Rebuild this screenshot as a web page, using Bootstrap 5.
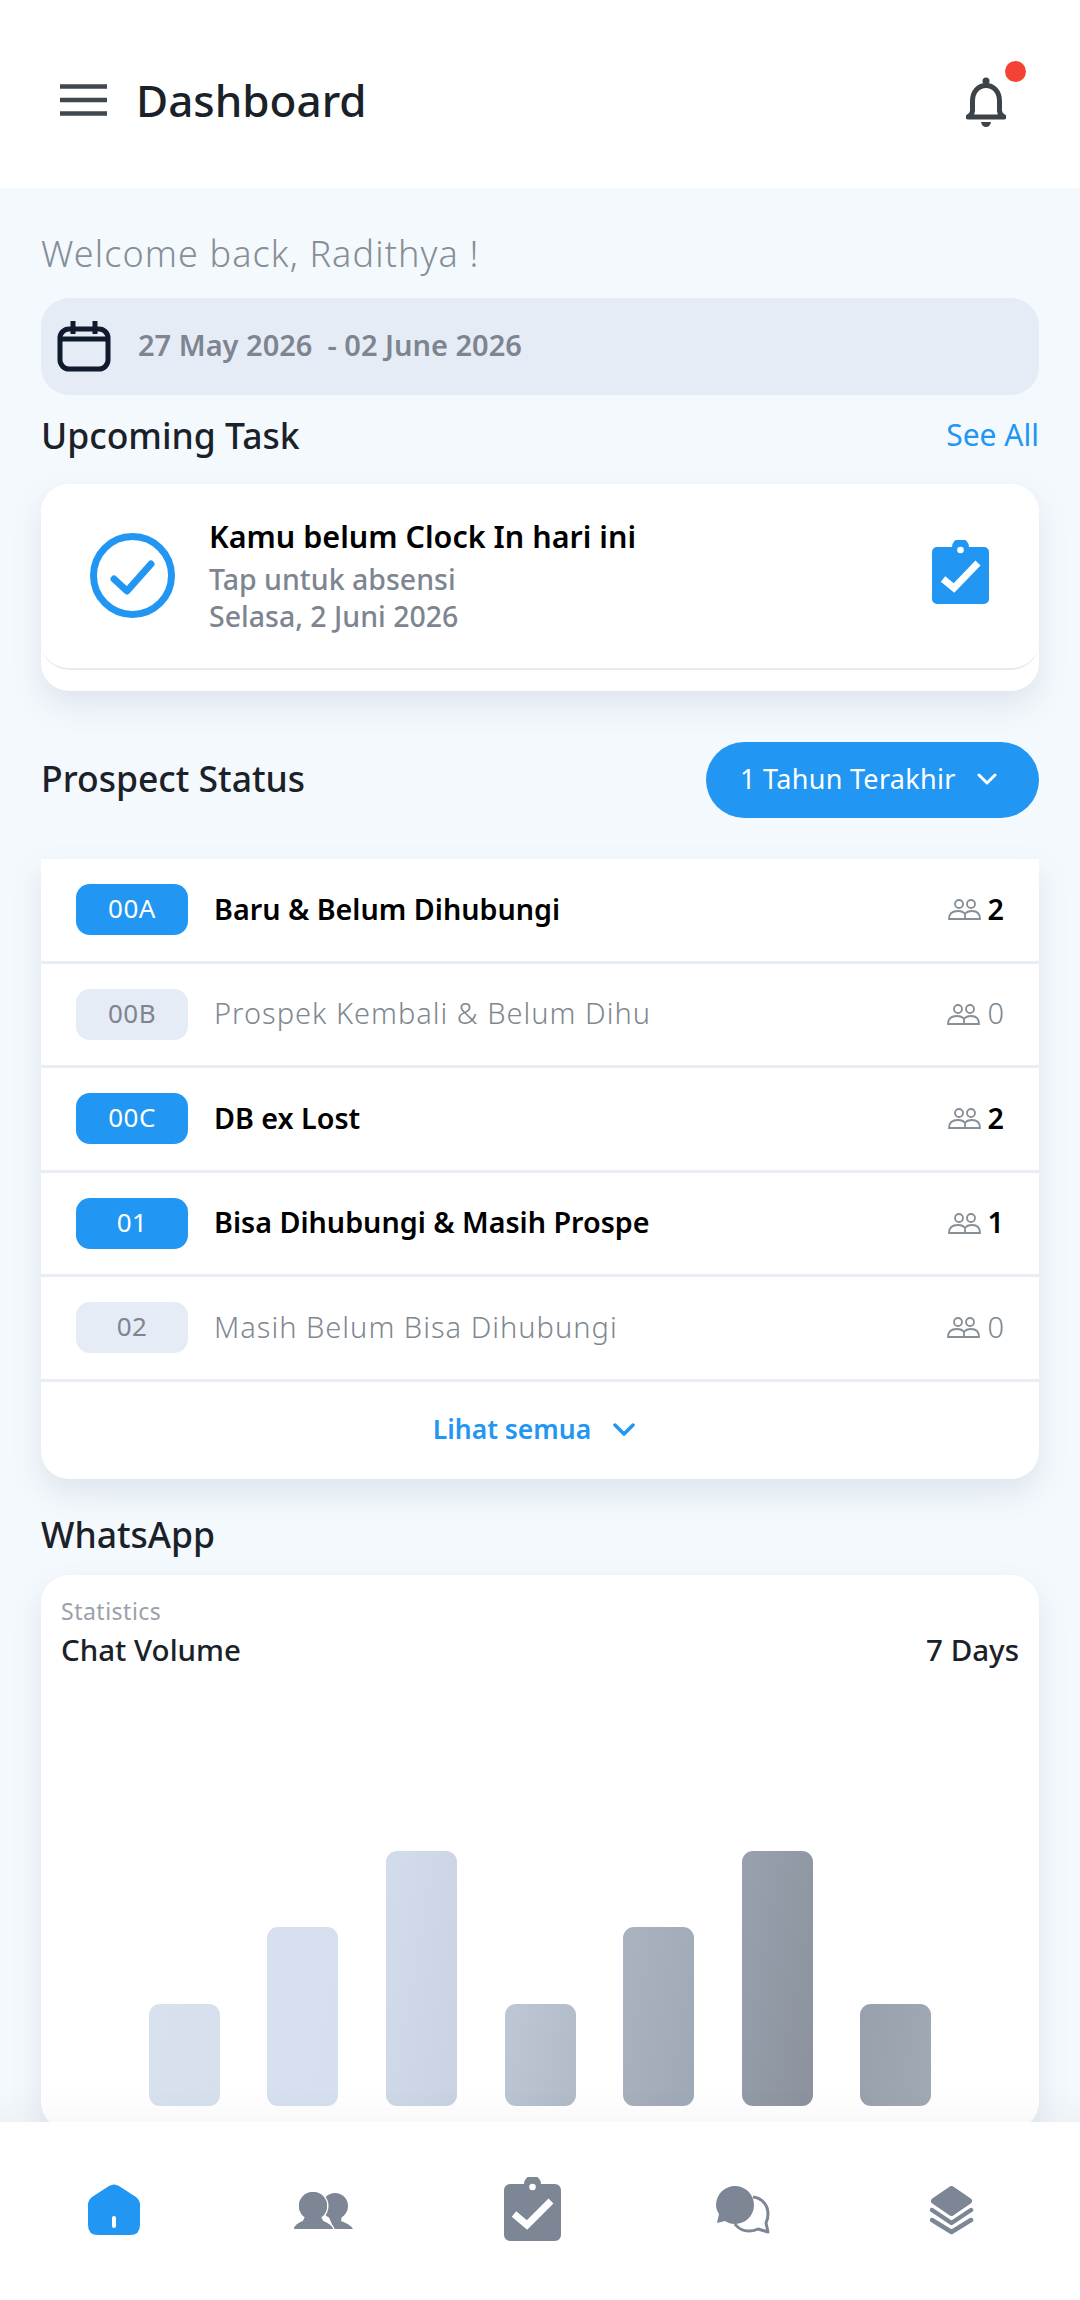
<!DOCTYPE html>
<html lang="en">
<head>
  <meta charset="UTF-8" />
  <title>Dashboard</title>
  <meta name="viewport" content="width=device-width, initial-scale=1.0" />
  <link href="https://cdn.jsdelivr.net/npm/bootstrap@5.3.2/dist/css/bootstrap.min.css" rel="stylesheet" />
  <style>
    html, body { height: 2300px; overflow: hidden; }
    body { font-family: "Noto Sans", sans-serif; background-color: #f4f9fd; color: #1b2128; }

    .top-bar { height: 188px; background: #fff; padding: 12px 54px 0 60px; }
    .top-title { font-size: 44px; line-height: 60px; font-weight: 500; margin: 0 0 0 29px; color: #1b2128; }
    .bell-wrap { width: 60px; height: 68px; margin-bottom: 10px; }
    .bell-icon { left: 0; bottom: 2px; }
    .bell-dot { top: 0; right: 0; width: 21px; height: 21px; border-radius: 50%; background: #f44336; }

    .page-body { padding: 41px 41px 0; }
    .welcome { font-size: 36px; line-height: 50px; color: #868e96; letter-spacing: 1.1px; font-weight: 300; }
    .date-bar { height: 97px; margin-top: 19px; padding-left: 16px; background: #e6ecf5; border-radius: 28px; gap: 27px; font-size: 29px; font-weight: 600; color: #7d8590; }
    .date-text { padding-bottom: 3px; }
    .section-head { font-size: 35.5px; line-height: 40px; padding-bottom: 4px; font-weight: 500; color: #1b2128; }
    .see-all { font-size: 30px; line-height: 40px; padding-bottom: 4px; color: #2196f3; text-decoration: none; }

    .soft-card { background: #fff; border: 0; border-radius: 28px; box-shadow: 0 14px 32px rgba(70, 90, 120, .13); }
    .task-card { height: 207px; margin-top: 25px; }
    .task-inner { height: 186px; padding: 0 50px 2px 49px; border-radius: 0 0 28px 28px; border-bottom: 2px solid #e6ebf0; }
    .task-title { font-size: 30.5px; line-height: 42px; font-weight: 600; color: #000; margin-bottom: 4px; }
    .task-sub { font-size: 28.5px; line-height: 37px; color: #7d8590; font-weight: 500; }
    .task-text { margin-left: 34px; }
    .task-clip { margin-bottom: 6px; }

    .prospect-head { margin-top: 51px; }
    .range-btn { width: 333px; height: 76px; padding: 0 42px 2px 34px; border-radius: 38px; background: #2196f3; border: 0; color: #fff; font-size: 27px; letter-spacing: .3px; }
    .range-btn:hover { background: #2196f3; color: #fff; }

    .status-card { height: 620px; margin-top: 41px; border-radius: 0 0 28px 28px; overflow: hidden; }
    .list-group-flush > .status-row, .list-group-flush > .status-row:last-child { height: 104.5px; padding: 0 35px; background: #fff; border: 0; border-bottom: 3px solid #e9eef4; border-radius: 0; font-size: 28.7px; font-weight: 600; color: #000; }
    .list-group-flush > .status-row.is-empty { font-size: 29px; font-weight: 300; color: #7f878f; letter-spacing: 1px; }
    .row-name { padding-bottom: 3px; }
    .code-tag { width: 112px; height: 51px; margin-right: 26px; padding-bottom: 2px; border-radius: 14px; font-size: 26px; font-weight: 400; letter-spacing: .5px; background: #2196f3; color: #fff; }
    .is-empty .code-tag { background: #e6ecf5; color: #7d8590; }
    .row-count { gap: 7px; letter-spacing: 0; }
    .count-num { padding-bottom: 3px; }
    .see-more { height: 97px; padding-right: 12px; gap: 22px; font-size: 26.500px; font-weight: 600; color: #2196f3; }

    .whatsapp-head { margin-top: 35px; }
    .chat-card { margin-top: 17px; height: 555px; padding: 22px 20px 0; }
    .stat-label { font-size: 23px; line-height: 28px; letter-spacing: .5px; color: #9aa1a9; }
    .chat-head { margin-top: 5px; font-size: 29.5px; line-height: 40px; font-weight: 500; color: #1b2128; }
    .bars { margin-top: 181px; height: 255px; gap: 47.6px; }
    .bar-item { width: 71px; border-radius: 11px; }

    .bottom-nav { height: 178px; background: #fff; padding: 0 23px 2px 9px; }
    .bottom-nav::before { content: ""; position: absolute; left: 0; right: 0; top: -34px; height: 34px; background: linear-gradient(rgba(0, 0, 0, 0), rgba(0, 0, 0, .025)); }
    .nav-clip { margin-bottom: 3px; }
  </style>
</head>
<body>
  <!-- Header -->
  <header class="top-bar d-flex align-items-center justify-content-between">
    <div class="d-flex align-items-center">
      <svg width="47" height="32" viewBox="0 0 47 32"><path d="M0 2.5h47M0 16h47M0 29.500h47" stroke="#3f474f" stroke-width="4.500" fill="none"/></svg>
      <h1 class="top-title">Dashboard</h1>
    </div>
    <div class="bell-wrap position-relative">
      <svg class="bell-icon position-absolute" width="40" height="50" viewBox="0 0 40 50"><path d="M6.500 34V24C6.500 15 12 8.500 20 8.500S33.500 15 33.500 24v10q.5 4 4.500 6H2q4-2 4.500-6Z" fill="none" stroke="#3c4349" stroke-width="5" stroke-linejoin="round"/><circle cx="20" cy="4" r="3.500" fill="#3c4349"/><path d="M15 45h10q-1 5-5 5t-5-5Z" fill="#3c4349"/></svg>
      <span class="bell-dot position-absolute"></span>
    </div>
  </header>

  <main class="page-body">
    <div class="welcome">Welcome back, Radithya !</div>

    <div class="date-bar d-flex align-items-center">
      <svg width="54" height="51" viewBox="0 0 54 51" fill="none" stroke="#111b2e" stroke-width="5"><rect x="3" y="8" width="48" height="40" rx="9"/><path d="M3 18h48M16 0v13M38 0v13"/></svg>
      <span class="date-text">27 May 2026 &nbsp;- 02 June 2026</span>
    </div>

    <div class="d-flex align-items-center justify-content-between mt-3 pt-1">
      <div class="section-head">Upcoming Task</div>
      <a class="see-all" href="#">See All</a>
    </div>

    <div class="card soft-card task-card">
      <div class="task-inner d-flex align-items-center">
        <svg width="85" height="85" viewBox="0 0 85 85" fill="none" stroke="#2196f3" stroke-width="7" stroke-linecap="round" stroke-linejoin="round"><circle cx="42.500" cy="42.500" r="39"/><path d="M24 46l13 12 24-27"/></svg>
        <div class="task-text flex-grow-1">
          <div class="task-title">Kamu belum Clock In hari ini</div>
          <div class="task-sub">Tap untuk absensi</div>
          <div class="task-sub">Selasa, 2 Juni 2026</div>
        </div>
        <svg class="task-clip" width="57" height="64" viewBox="0 0 57 64"><path d="M5 7h15a8.500 8.500 0 0 1 17 0h15a5 5 0 0 1 5 5v47a5 5 0 0 1-5 5H5a5 5 0 0 1-5-5V12a5 5 0 0 1 5-5Z" fill="#2196f3"/><circle cx="28.500" cy="10" r="3.300" fill="#fff"/><path d="M11 39l11 9 24-25" fill="none" stroke="#fff" stroke-width="7"/></svg>
      </div>
    </div>

    <div class="d-flex align-items-center justify-content-between prospect-head">
      <div class="section-head">Prospect Status</div>
      <button class="btn range-btn d-flex align-items-center justify-content-between" type="button">
        1 Tahun Terakhir
        <svg width="20" height="12" viewBox="0 0 20 12" fill="none" stroke="#fff" stroke-width="3" stroke-linecap="round" stroke-linejoin="round"><path d="M2 2l8 8 8-8"/></svg>
      </button>
    </div>

    <div class="card soft-card status-card">
      <div class="list-group list-group-flush" id="status-list"></div>
      <div class="see-more d-flex align-items-center justify-content-center">
        Lihat semua
        <svg width="22" height="14" viewBox="0 0 22 14" fill="none" stroke="#2196f3" stroke-width="3.500" stroke-linecap="round" stroke-linejoin="round"><path d="M2 2l9 9 9-9"/></svg>
      </div>
    </div>

    <div class="section-head whatsapp-head">WhatsApp</div>

    <div class="card soft-card chat-card">
      <div class="stat-label">Statistics</div>
      <div class="chat-head d-flex justify-content-between">
        <span>Chat Volume</span>
        <span>7 Days</span>
      </div>
      <div class="bars d-flex align-items-end justify-content-center" id="bars"></div>
    </div>
  </main>

  <!-- Bottom nav -->
  <nav class="bottom-nav fixed-bottom row g-0 align-items-center text-center">
    <div class="col"><svg width="52" height="52" viewBox="0 0 52 52"><path d="M21 2 4 13q-4 3-4 8v20q0 10 10 10h32q10 0 10-10V21q0-5-4-8L31 2q-5-3-10 0Z" fill="#2196f3"/><rect x="24" y="32" width="4" height="12" rx="2" fill="#fff"/></svg></div>
    <div class="col"><svg width="59" height="39" viewBox="0 0 59 39" fill="#7d8694"><circle cx="41" cy="15" r="13"/><path d="M34 24h14l-1 6q9 3 12 8H40Z"/><g stroke="#fff" stroke-width="3" paint-order="stroke"><circle cx="19" cy="15" r="14"/><path d="M11 26l-2 4q-8 3-9 8h39q-2-5-10-8l-2-4Z"/></g><circle cx="19" cy="15" r="14"/><path d="M11 26l-2 4q-8 3-9 8h39q-2-5-10-8l-2-4Z"/></svg></div>
    <div class="col nav-clip"><svg width="57" height="64" viewBox="0 0 57 64"><path d="M6 7h14a8.500 8.500 0 0 1 17 0h14a6 6 0 0 1 6 6v45a6 6 0 0 1-6 6H6a6 6 0 0 1-6-6V13a6 6 0 0 1 6-6Z" fill="#7d8694"/><circle cx="28.500" cy="10" r="3.300" fill="#fff"/><path d="M10 37l13 11 24-24" fill="none" stroke="#fff" stroke-width="7"/></svg></div>
    <div class="col"><svg width="54" height="48" viewBox="0 0 54 48"><path d="M37 11c10 1 15 9 15 17 0 4-1 7-2 9l2 9-10-3c-9 4-18 2-23-5" fill="none" stroke="#7d8694" stroke-width="3" stroke-linejoin="round"/><path d="M19 0a19 19 0 0 1 0 38c-4 0-7-1-10-3l-8 2 2-9c-2-3-3-6-3-9A19 19 0 0 1 19 0Z" fill="#7d8694"/></svg></div>
    <div class="col"><svg width="44" height="49" viewBox="0 0 44 49"><path d="M21.500 3 39 15 21.500 27 4 15Z" fill="#7d8694" stroke="#7d8694" stroke-width="6" stroke-linejoin="round"/><path d="M2 24l19.500 13L41 24M2 34l19.500 12L41 34" fill="none" stroke="#7d8694" stroke-width="4.500" stroke-linejoin="round" stroke-linecap="round"/></svg></div>
  </nav>

  <script src="https://cdn.jsdelivr.net/npm/bootstrap@5.3.2/dist/js/bootstrap.bundle.min.js"></script>
  <script>
    const statuses = [
      { code: "00A", name: "Baru & Belum Dihubungi", count: 2 },
      { code: "00B", name: "Prospek Kembali & Belum Dihu", count: 0 },
      { code: "00C", name: "DB ex Lost", count: 2 },
      { code: "01", name: "Bisa Dihubungi & Masih Prospe", count: 1 },
      { code: "02", name: "Masih Belum Bisa Dihubungi", count: 0 }
    ];
    const peopleIcon = '<svg width="33" height="21" viewBox="0 0 33 21" fill="none" stroke="#868e96" stroke-width="1.800"><circle cx="11" cy="5" r="4"/><circle cx="23" cy="5" r="4"/><path d="M1 20q0-8 9-8 5 0 7 3 2-3 7-3 8 0 8 8ZM17 15v5"/></svg>';

    document.getElementById("status-list").innerHTML = statuses.map(s => `
      <div class="list-group-item status-row d-flex align-items-center ${s.count === 0 ? "is-empty" : ""}">
        <span class="code-tag d-flex align-items-center justify-content-center">${s.code}</span>
        <span class="row-name flex-grow-1">${s.name.replace("&", "&amp;")}</span>
        <span class="row-count d-flex align-items-center">${peopleIcon}<span class="count-num">${s.count}</span></span>
      </div>`).join("");

    const bars = [
      [102, "#d8e1ee", "#d6dfec"], [179, "#d7e0ee", "#d6dfed"], [255, "#d3dcea", "#c8d2e0"], [102, "#bec7d5", "#b1bbc8"],
      [179, "#abb3c0", "#9fa8b6"], [255, "#99a1ae", "#8b929e"], [102, "#98a0ac", "#a1a9b5"]
    ];
    document.getElementById("bars").innerHTML = bars.map(b =>
      `<div class="bar-item" style="height:${b[0]}px;background:linear-gradient(100deg,${b[1]},${b[2]})"></div>`).join("");
  </script>
</body>
</html>
